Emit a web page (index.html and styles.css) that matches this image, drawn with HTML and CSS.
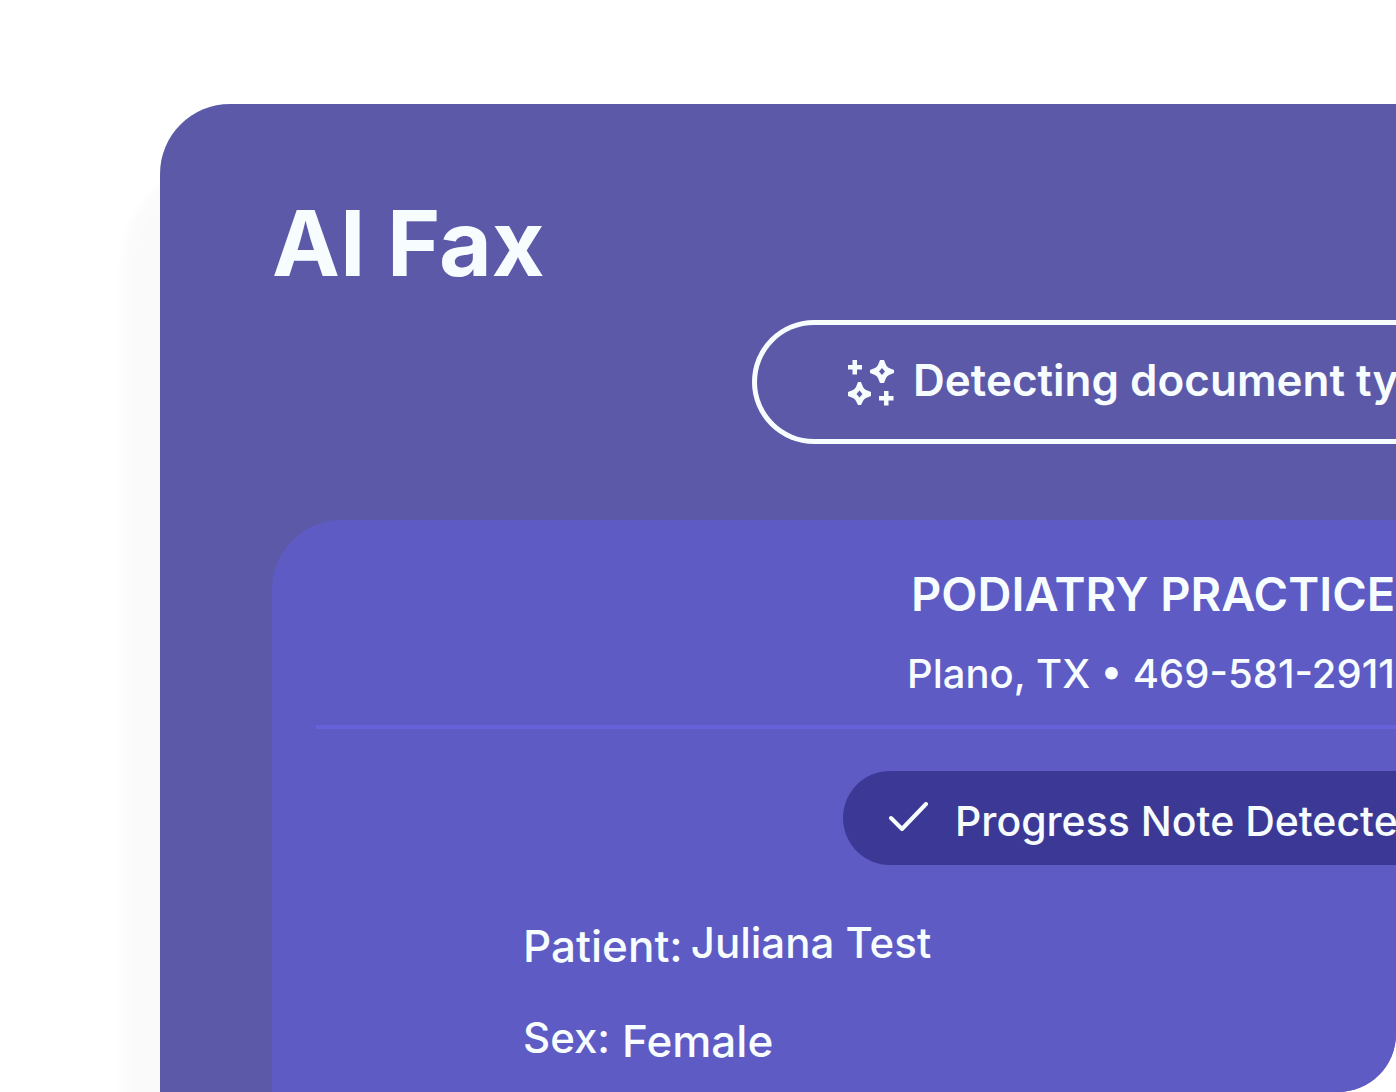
FILE: index.html
```html
<!DOCTYPE html>
<html lang="en">

<head>
    <meta charset="UTF-8">
    <meta name="viewport" content="width=device-width, initial-scale=1.0">
    <title>AI Fax</title>
    <link rel="stylesheet" href="styles.css">
</head>

<body>
    <div class="screen">
        <main class="panel">
            <h1>AI Fax</h1>

            <!-- Detection status -->
            <div class="status">
                <svg class="sparkles" viewBox="0 0 46 46" aria-hidden="true">
                    <path d="M4.500 0h4.500v5h5v4.500H9v5H4.500v-5H0V5h4.500ZM36 31h4.500v5h5v4.500h-5v5H36v-5h-5V36h5Z" />
                    <path fill-rule="evenodd" d="M32 0h4l2 5q1 2 3 3l5 2v3l-5 2q-2 1-3 3l-2 5h-4l-2-5q-1-2-3-3l-5-2v-3l5-2q2-1 3-3ZM34 8l-3 3.500l3 3.500l3-3.500Z" />
                    <path fill-rule="evenodd" d="M10 22h3l2 5q1 2 3 3l5 2v4l-5 2q-2 1-3 3l-2 4h-3l-2-4q-1-2-3-3l-5-2v-4l5-2q2-1 3-3ZM11.500 30.500l-3 3.500l3 3.500l3-3.500Z" />
                </svg>
                <span>Detecting document type</span>
            </div>

            <!-- Document -->
            <section class="document">
                <header class="practice">
                    <h2>PODIATRY PRACTICE</h2>
                    <p>Plano, TX • 469-581-2911</p>
                </header>

                <div class="badge">
                    <svg class="check" viewBox="0 0 40 30" aria-hidden="true">
                        <path d="M2 16L13 27L37 2" />
                    </svg>
                    <span>Progress Note Detected</span>
                </div>

                <dl class="details">
                    <div class="row">
                        <dt class="large">Patient:</dt>
                        <dd>Juliana Test</dd>
                    </div>
                    <div class="row row-wide">
                        <dt>Sex:</dt>
                        <dd class="large">Female</dd>
                    </div>
                </dl>
            </section>
        </main>
    </div>
</body>

</html>
```
FILE: styles.css
```css
* {
    box-sizing: border-box;
}

body {
    font-family: Inter, sans-serif;
    background-color: #fff;
    color: #f7fcff;
    margin: 0;
}

h1, h2, p, dl, dd {
    margin: 0;
}

.screen {
    height: 100vh;
    padding: 104px 0 0 160px;
    border-bottom-right-radius: 58px;
    overflow: hidden;
}

.panel {
    display: flex;
    flex-direction: column;
    min-height: 100%;
    padding: 83px 0 0 112px;
    background-color: #5c5aa8;
    border-top-left-radius: 70px;
    box-shadow: 0 93px 10px 38px rgba(0, 0, 0, 0.02);
}

h1 {
    font-size: 91px;
    font-weight: 700;
    line-height: 112px;
}

/* Outlined pill */
.status {
    display: flex;
    align-items: center;
    gap: 19px;
    height: 124px;
    margin: 21px 0 0 480px;
    padding: 0 0 4px 91px;
    border: 5px solid #f7fcff;
    border-right: none;
    border-radius: 62px 0 0 62px;
    font-size: 44px;
    font-weight: 600;
    white-space: nowrap;
}

.sparkles {
    flex: none;
    width: 46px;
    height: 46px;
    margin-top: 6px;
    fill: #f7fcff;
}

/* Document card */
.document {
    flex: 1;
    margin-top: 76px;
    padding: 46px 0 20px 44px;
    background-color: #5e5bc5;
    border-top-left-radius: 70px;
    white-space: nowrap;
}

.practice {
    padding: 0 0 27px 591px;
    border-bottom: 4px solid #6761da;
}

h2 {
    padding-left: 4px;
    font-size: 47px;
    font-weight: 600;
    line-height: 56px;
}

.practice p {
    margin-top: 28px;
    font-size: 40px;
    font-weight: 500;
    line-height: 48px;
}

.badge {
    display: flex;
    align-items: center;
    gap: 26px;
    height: 94px;
    margin: 42px 0 0 527px;
    padding: 6px 0 0 46px;
    background-color: #3c3996;
    border-radius: 47px 0 0 47px;
    font-size: 41px;
    font-weight: 500;
}

.check {
    flex: none;
    width: 40px;
    height: 30px;
    margin-bottom: 8px;
    fill: none;
    stroke: #f7fcff;
    stroke-width: 4;
    stroke-linecap: round;
    stroke-linejoin: round;
}

/* Patient details */
.details {
    display: grid;
    gap: 32px;
    padding: 48px 0 0 207px;
    font-size: 42px;
    font-weight: 500;
    line-height: 60px;
}

.row {
    display: flex;
    gap: 8px;
}

.row-wide {
    gap: 12px;
}

.large {
    padding-top: 3px;
    font-size: 44px;
}
```
